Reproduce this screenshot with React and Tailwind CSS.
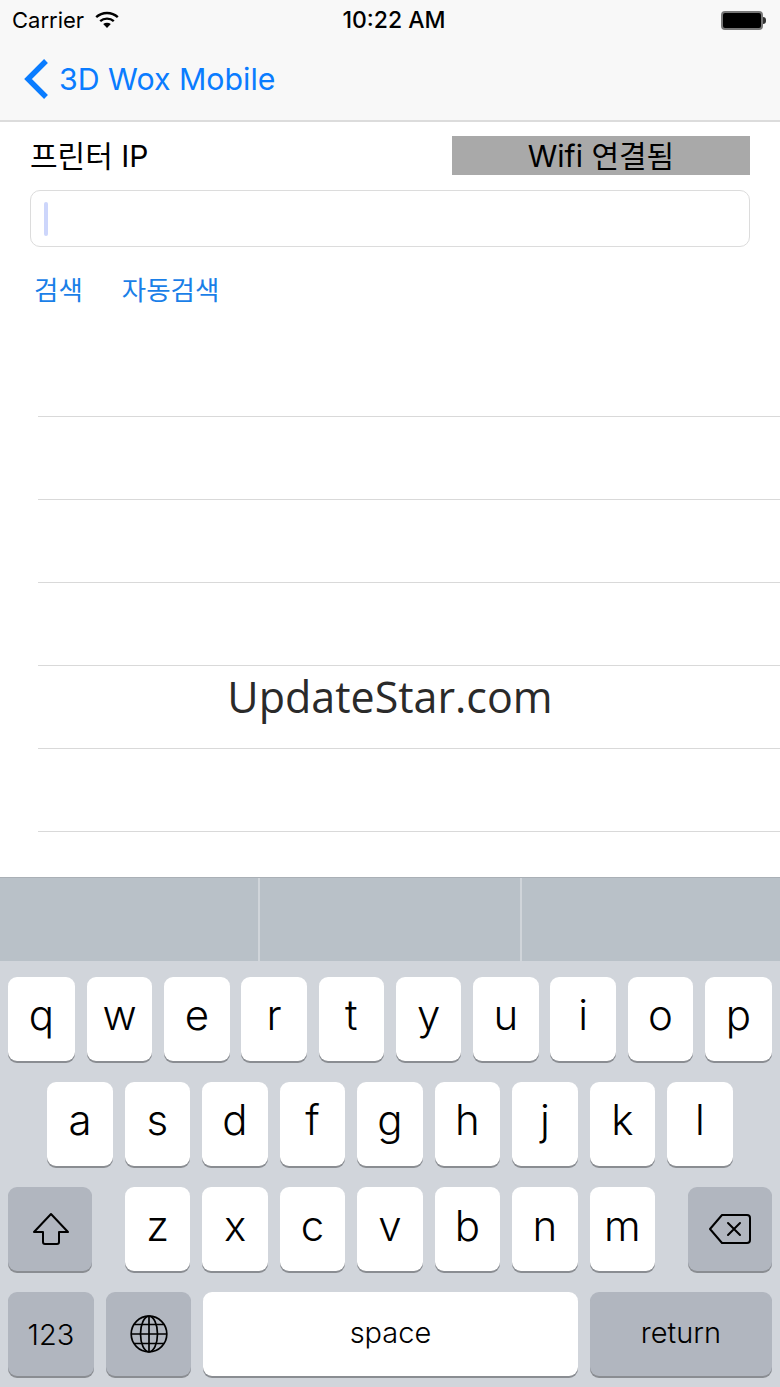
import React from 'react';

const SANS = 'font-["Inter","Noto_Sans_CJK_KR",sans-serif]';

const Key = ({ label, className = 'w-[65.9px]' }) => (
  <div className={`${className} h-[84px] rounded-[9px] bg-white shadow-[0_2px_0_#8a8d92] flex items-center justify-center text-[42px] font-light text-black`}>
    <span className="-mt-2">{label}</span>
  </div>
);

const DarkKey = ({ children, className }) => (
  <div className={`${className} h-[84px] rounded-[9px] bg-[#b1b6bf] shadow-[0_2px_0_#8a8d92] flex items-center justify-center text-black`}>
    {children}
  </div>
);

const Row = ({ letters, wideEnds }) => letters.split('').map((l, i) => {
  if (!wideEnds) return <Key key={l} label={l} />;
  return <Key key={l} label={l} className={i === 0 || i === letters.length - 1 ? 'w-[67px]' : 'w-[65.4px]'} />;
});

const WifiIcon = () => (
  <svg width="24" height="18" viewBox="0 0 24 18" className="ml-[11px]">
    <path d="M1.2 6.2C7.2 0.6 16.8 0.6 22.8 6.2" fill="none" stroke="#000" strokeWidth="2.4" />
    <path d="M5.2 10.2C9 6.8 15 6.8 18.8 10.2" fill="none" stroke="#000" strokeWidth="2.4" />
    <path d="M8.2 13 C10.4 11.3 13.6 11.3 15.8 13 L12 17 Z" fill="#000" />
  </svg>
);

const ShiftIcon = () => (
  <svg width="38" height="34" viewBox="0 0 38 34" fill="none" stroke="#000" strokeWidth="2" strokeLinejoin="round" className="ml-[2px]">
    <path d="M19 2 L36 20 H27 V30 Q27 32 25 32 H13 Q11 32 11 30 V20 H2 Z" />
  </svg>
);

const DeleteIcon = () => (
  <svg width="44" height="32" viewBox="0 0 44 32" fill="none" stroke="#000" strokeWidth="2" strokeLinejoin="round" strokeLinecap="round">
    <path d="M14 2 H39 Q42 2 42 5 V27 Q42 30 39 30 H14 L2 16 Z" />
    <path d="M20 10 L32 22 M32 10 L20 22" />
  </svg>
);

const GlobeIcon = () => (
  <svg width="38" height="38" viewBox="0 0 38 38" fill="none" stroke="#000" strokeWidth="1.7">
    <circle cx="19" cy="19" r="17.8" />
    <ellipse cx="19" cy="19" rx="8.5" ry="17.8" />
    <path d="M19 1.2 V36.8 M1.2 19 H36.8 M4 9.5 H34 M4 28.5 H34" />
  </svg>
);

export default function App() {
  return (
    <div className={`relative w-[780px] h-[1387px] overflow-hidden bg-white flex flex-col ${SANS}`}>
      <div className="h-[122px] shrink-0 bg-[#f8f8f8] border-b-2 border-[#dcdcdc] flex flex-col">
        <div className="h-[40px] px-3 grid grid-cols-3 items-center text-black">
          <div className="flex items-center text-[22px] leading-none">Carrier<WifiIcon /></div>
          <div className="pl-[8px] whitespace-nowrap text-center text-[23px] font-medium leading-none">10:22 AM</div>
          <div className="flex justify-end items-center pr-[2px]">
            <div className="w-[42px] h-[19px] rounded-[4px] bg-black border-2 border-[#777]" />
            <div className="w-[3px] h-[7px] rounded-r-sm bg-[#333]" />
          </div>
        </div>
        <div className="flex-1 flex items-center pl-[24px] text-[#0a7cff] pb-[2px]">
          <svg width="24" height="40" viewBox="0 0 24 40" fill="none" stroke="#0a7cff" strokeWidth="5.4">
            <path d="M22 2 L4 20 L22 38" />
          </svg>
          <span className="ml-[11px] text-[30.3px] leading-none">3D Wox Mobile</span>
        </div>
      </div>

      <div className="flex-1 min-h-0 overflow-hidden flex flex-col">
        <div className="pl-[30px] pr-[30px] pt-[14px] flex justify-between items-start">
          <span className="text-[30px] leading-[40px] text-black">프린터 IP</span>
          <div className="w-[298px] h-[39px] bg-[#a9a9a9] text-[30px] leading-[40px] text-center text-black">Wifi 연결됨</div>
        </div>
        <div className="mx-[30px] mt-[14px] h-[57px] shrink-0 rounded-[10px] border border-[#dcdcdc] flex items-center pl-[13px]">
          <div className="w-[4px] h-[34px] rounded-full bg-[#cdd6fb]" />
        </div>
        <div className="pl-[34px] mt-[24px] flex gap-[39px] text-[#1a7fe8] text-[26.5px] leading-[38px]">
          <span>검색</span>
          <span>자동검색</span>
        </div>
        <div className="ml-[38px] mt-[107px] flex flex-col">
          {[0, 1, 2, 3, 4, 5].map(i => (
            <div key={i} className="h-[83px] shrink-0 border-t border-[#d9d9d9]" />
          ))}
        </div>
      </div>

      <div className="absolute left-0 right-0 top-[666px] text-center text-[43px] leading-[62px] text-[#2a2a2a] font-['Open_Sans',sans-serif]">
        UpdateStar.com
      </div>

      <div className="h-[510px] shrink-0 bg-[#d1d5db] flex flex-col">
        <div className="h-[84px] shrink-0 bg-[#b9c1c8] border-t border-[#aab0b6] flex">
          <div className="w-[260px] border-r-2 border-[#d0d5da]" />
          <div className="w-[262px] border-r-2 border-[#d0d5da]" />
        </div>
        <div className="flex-1 px-[8px] pt-[15.5px] flex flex-col gap-[21.3px]">
          <div className="flex justify-between">
            <Row letters="qwertyuiop" wideEnds />
          </div>
          <div className="flex justify-between px-[39px]">
            <Row letters="asdfghjkl" />
          </div>
          <div className="flex justify-between">
            <DarkKey className="w-[84px]"><ShiftIcon /></DarkKey>
            <div className="flex gap-[11.6px]">
              <Row letters="zxcvbnm" />
            </div>
            <DarkKey className="w-[84px]"><DeleteIcon /></DarkKey>
          </div>
          <div className="flex gap-[12px]">
            <DarkKey className="w-[86px] text-[29px] font-light">123</DarkKey>
            <DarkKey className="w-[85px]"><GlobeIcon /></DarkKey>
            <div className="flex-1 h-[84px] rounded-[9px] bg-white shadow-[0_2px_0_#8a8d92] flex items-center justify-center text-[29px] font-light text-black"><span className="-mt-1">space</span></div>
            <DarkKey className="w-[182px] text-[29px] font-light"><span className="-mt-1">return</span></DarkKey>
          </div>
        </div>
      </div>
    </div>
  );
}
